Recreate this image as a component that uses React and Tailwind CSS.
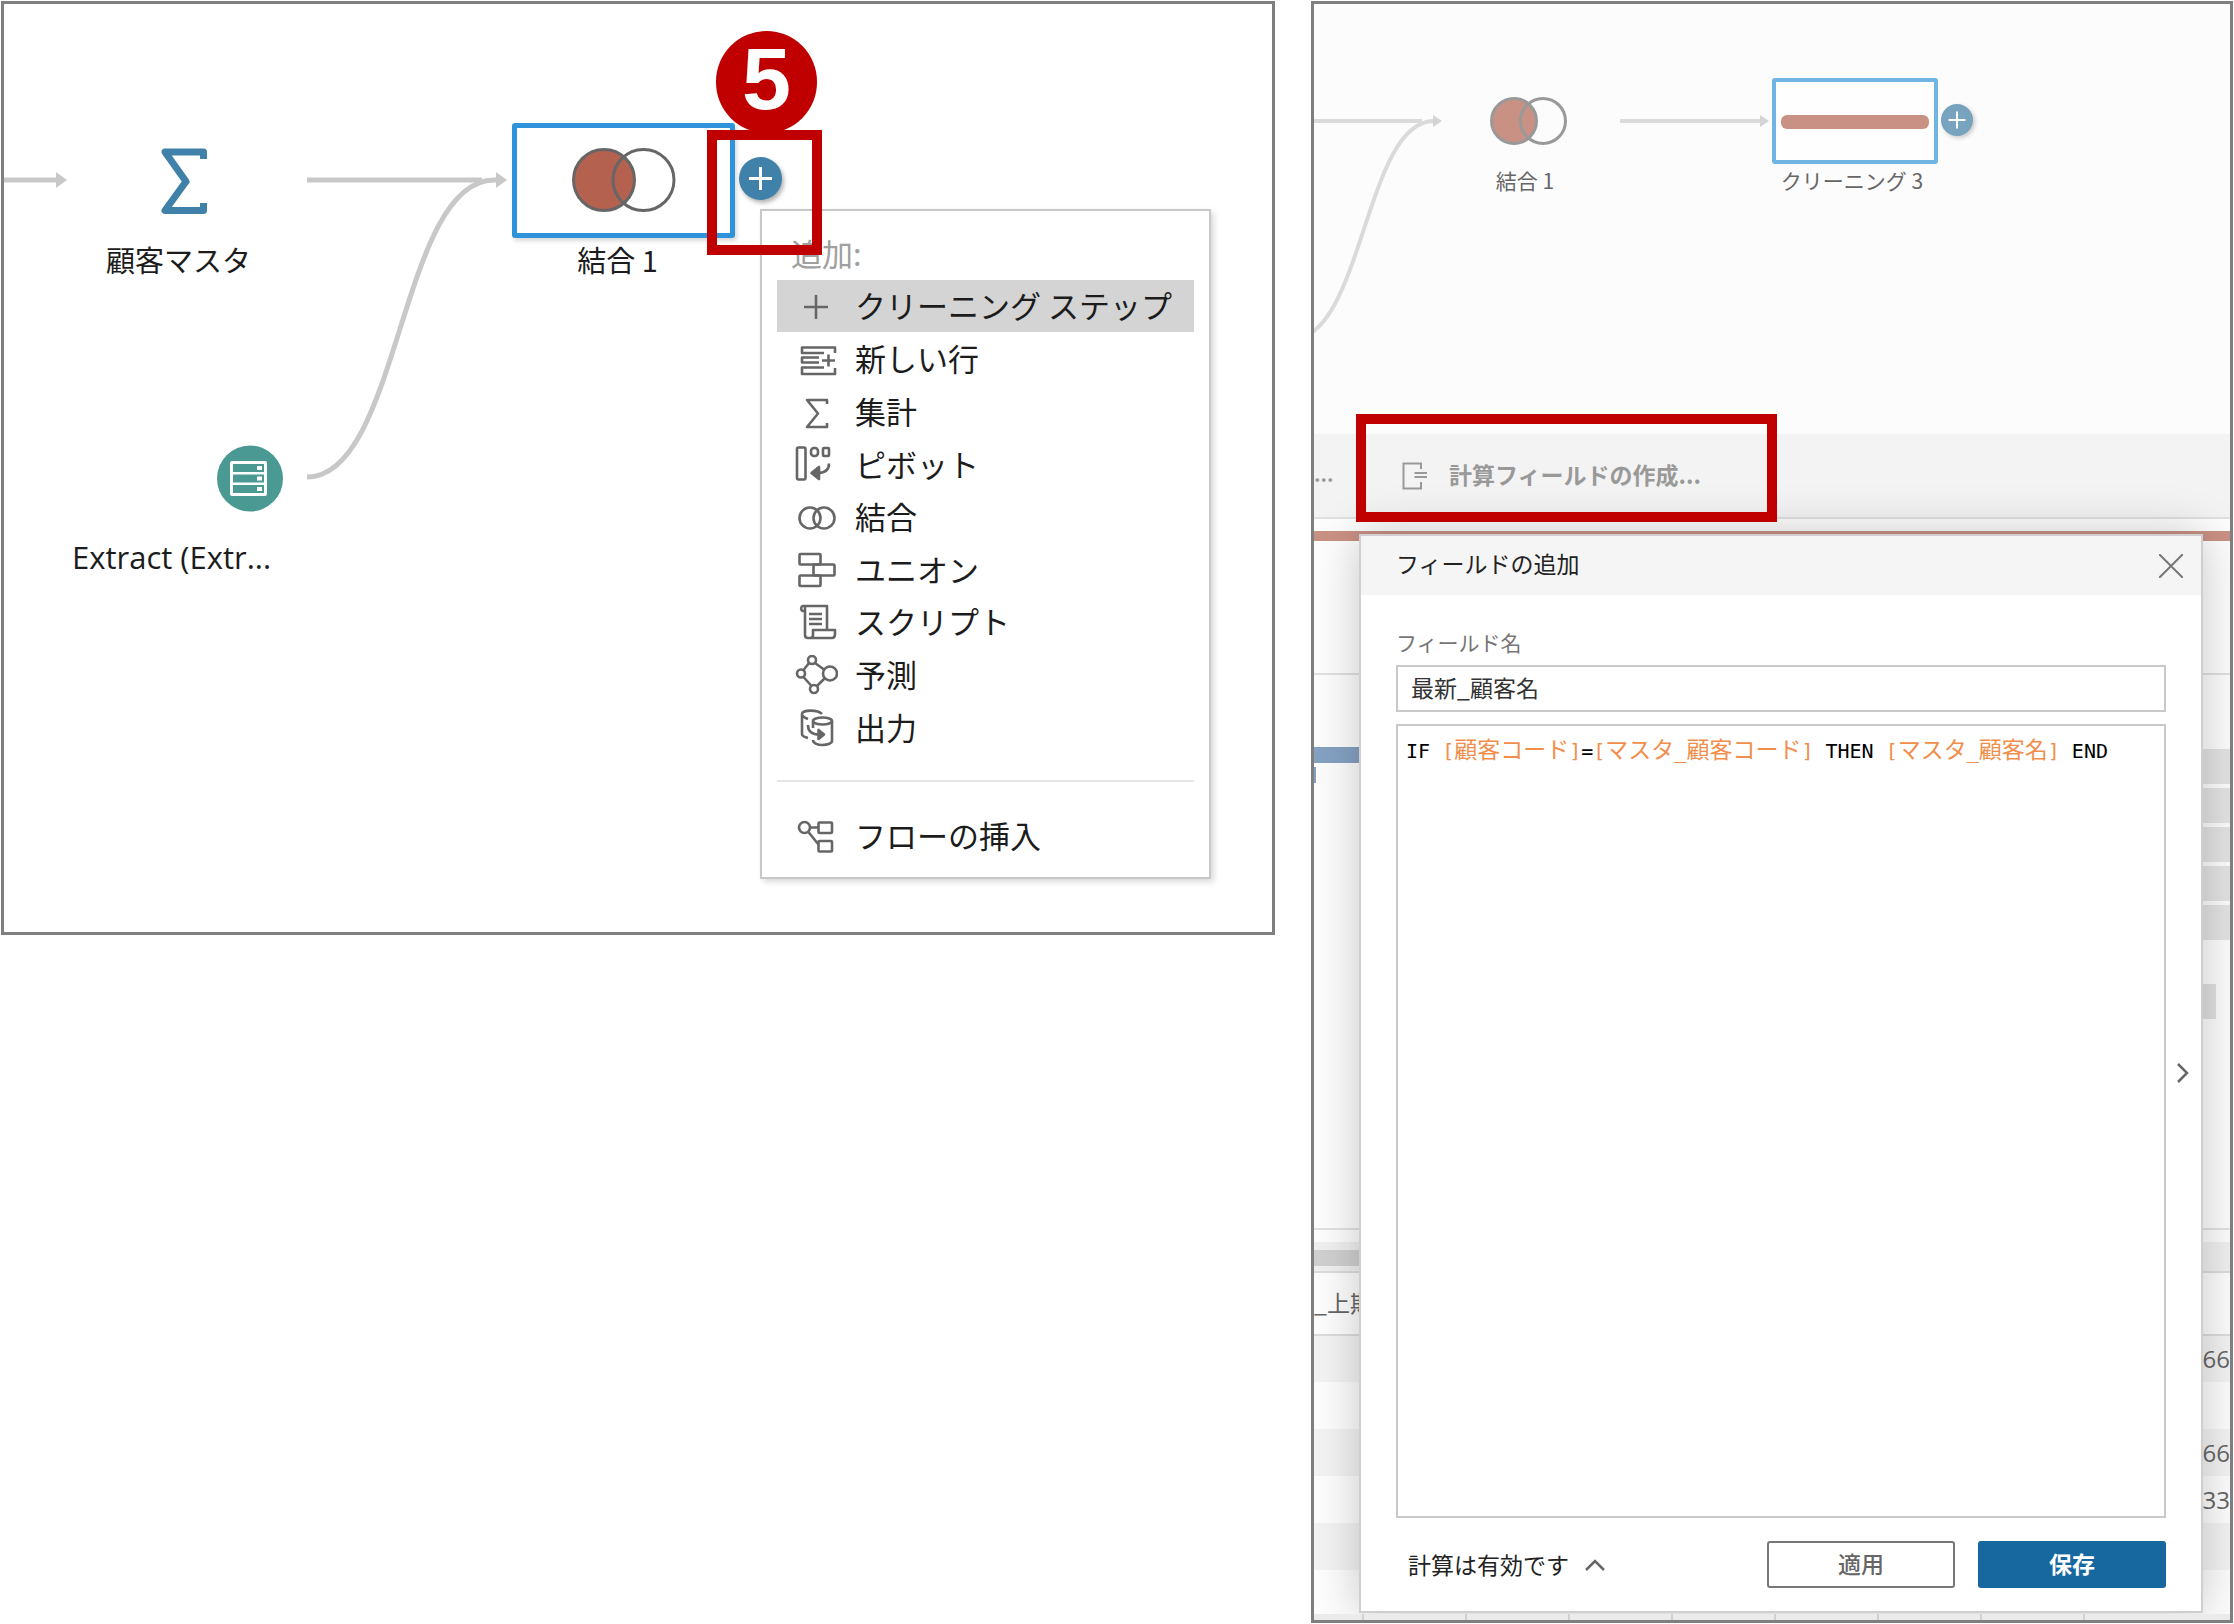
import React, { useState } from 'react';

const stroke = { fill: 'none', stroke: '#666', strokeWidth: 2.6, strokeLinejoin: 'round' };

const icons = {
  clean: <path d="M10 21h24M22 9v24" />,
  row: <path d="M41 14V8.500H8V14h22M25 18.500H8v5h17M30 28.500H8V35h33v-6M34.500 15.500v12M28 21.500h13" />,
  sum: <path d="M33 12V8H13l11 13.500L13 35h20v-4" />,
  pivot: (
    <>
      <rect x="3" y="2.500" width="8.500" height="32" rx="1.500" />
      <rect x="17" y="3" width="7" height="8" rx="3" />
      <rect x="29" y="3" width="6" height="8" rx="1" />
      <path d="M35 18.500c0 6-3 9-10 9.500" />
      <path d="M17.500 28l7.500-6v12z" fill="#666" />
    </>
  ),
  join: (
    <>
      <circle cx="16" cy="21" r="10.500" />
      <circle cx="30" cy="21" r="10.500" />
    </>
  ),
  union: (
    <>
      <rect x="5.500" y="4" width="21" height="10.500" rx="1" />
      <rect x="19.500" y="14.500" width="21" height="11" rx="1" />
      <rect x="5.500" y="25.500" width="21" height="10.500" rx="1" />
    </>
  ),
  script: (
    <>
      <path d="M11 9H8.500a3 3 0 0 1 0-5H33v23M11 4v29c0 2 1 3 3 3h24c2 0 3-1.500 3-4v-4H19v5c0 2-1 3-3 3" />
      <path d="M15 12h13M15 17h13M15 22h13" />
    </>
  ),
  predict: (
    <>
      <circle cx="18" cy="5" r="4" />
      <circle cx="36" cy="18.500" r="7" />
      <circle cx="7" cy="18.500" r="4" />
      <circle cx="20" cy="34" r="4" />
      <path d="M21 8l9 6.500M15 8l-5.500 7M9.500 22l8 9M23 31l8-8" />
    </>
  ),
  output: (
    <>
      <path d="M28 6C24 1.500 8 1.500 8 6v20c0 2 2 3 6 4M8 7c1 2 3 3 6 4" />
      <ellipse cx="28.500" cy="13" rx="9.500" ry="3.500" />
      <path d="M38 13v20c0 2-4 4-9.500 4S19 35 19 32M19 13v7" />
      <path d="M14 17c0 6 3 9.500 11 9.500" />
      <path d="M30 26.500l-5.500-4.500v9z" fill="#666" />
    </>
  ),
  flow: (
    <>
      <circle cx="10.500" cy="11.500" r="5.500" />
      <rect x="24.500" y="6.500" width="13.500" height="10.500" rx="1" />
      <rect x="24.500" y="25" width="13.500" height="10.500" rx="1" />
      <path d="M16 11.500h8.500M14 15.500l10.500 13" />
    </>
  ),
};

const menuItems = [
  ['row', '新しい行'],
  ['sum', '集計'],
  ['pivot', 'ピボット'],
  ['join', '結合'],
  ['union', 'ユニオン'],
  ['script', 'スクリプト'],
  ['predict', '予測'],
  ['output', '出力'],
];

const tableRows = ['66', '', '66', '33', '', ''];

const MenuIcon = ({ name }) => (
  <svg width="44" height="40" viewBox="0 0 44 40" {...stroke}>{icons[name]}</svg>
);

const MenuItem = ({ icon, label, active }) => (
  <button
    role="menuitem"
    className={`flex min-h-[52px] w-full items-center gap-[17px] pl-[17px] text-left ${active ? 'bg-[#d4d4d4]' : ''}`}
  >
    <MenuIcon name={icon} />
    <span className="pb-0.5">{label}</span>
  </button>
);

const AddMenu = () => (
  <div role="menu" className="absolute left-[756px] top-[205px] w-[451px] border-2 border-[#c8c8c8] bg-white px-[15px] pb-[15px] pt-[18px] text-[31px] leading-[48px] text-[#1c1c1c] shadow-[3px_3px_6px_rgba(0,0,0,0.15)]">
    <p className="h-[51px] pl-3.5 text-[#a0a0a0]">追加:</p>
    <MenuItem icon="clean" label="クリーニング ステップ" active />
    <div className="grid h-[422px] grid-rows-8 pt-px">
      {menuItems.map(([icon, label]) => <MenuItem key={icon} icon={icon} label={label} />)}
    </div>
    <hr className="mb-7 mt-[26px] border-t-2 border-[#e6e6e6]" />
    <MenuItem icon="flow" label="フローの挿入" />
  </div>
);

const FlowPanel = () => (
  <section className="relative h-[934px] min-w-0 flex-[1275] overflow-hidden border-[3px] border-[#7f7f7f] bg-white text-[29px] leading-9 text-[#1c1c1c]">
    {/* edges and node symbols */}
    <svg className="absolute left-0 top-0" width="760" height="540" viewBox="4 4 760 540" fill="none">
      <g stroke="#c8c8c8" strokeWidth="5">
        <path d="M0 180h58M307 180h175" />
        <path d="M307 477C400 477 400 180 494 180h4" />
      </g>
      <path d="M56 172l11 8-11 8zM496 172l11 8-11 8z" fill="#c8c8c8" />
      <path d="M203.500 159v-7H165l21 29.500-21 29H203.500V203" stroke="#3f81a9" strokeWidth="7" strokeLinejoin="round" />
      <circle cx="250" cy="478.500" r="33" fill="#4a9993" />
      <rect x="230" y="461" width="37" height="35" rx="2" fill="#fff" />
      <path d="M233 464h31v8h-31zM233 474.500h31v8h-31zM233 485h31v8h-31z" fill="#4a9993" />
      <path d="M257 466h5v4h-5zM257 476.500h5v4h-5zM257 487h5v4h-5z" fill="#fff" />
    </svg>
    <span className="absolute left-[102px] top-[237px]">顧客マスタ</span>
    <span className="absolute left-[68px] top-[535px] font-['Open_Sans',sans-serif] text-[31px]">Extract (Extr...</span>

    <div className="absolute left-[508px] top-[119px] flex h-[115px] w-[223px] items-center justify-center rounded-[3px] border-[5px] border-[#2f93dc] bg-white shadow-[2px_3px_4px_rgba(0,0,0,0.15)]">
      <svg width="106" height="66" viewBox="571 148 106 66" fill="none" stroke="#666" strokeWidth="3">
        <circle cx="604" cy="180" r="30.500" fill="#b46150" />
        <circle cx="643.500" cy="180" r="30.500" />
      </svg>
    </div>
    <span className="absolute left-[508px] top-[237px] w-[211px] text-center">結合 1</span>
    <button aria-label="追加" className="absolute left-[735px] top-[153px] h-[43px] w-[43px] rounded-full bg-[#3f81a9] shadow-[2px_3px_4px_rgba(0,0,0,0.3)]">
      <svg width="43" height="43" viewBox="0 0 43 43" stroke="#fff" strokeWidth="3"><path d="M10 21.500h23M21.500 10v23" /></svg>
    </button>
    <AddMenu />

    <div className="absolute left-[703px] top-[126px] h-[125px] w-[115px] border-[10px] border-[#c00000]" />
    <div className="absolute left-[712px] top-[27px] flex h-[102px] w-[101px] items-center justify-center rounded-full bg-[#c00000] pb-1.5 font-['Liberation_Sans',sans-serif] text-[88px] font-bold leading-none text-white">5</div>
  </section>
);

const StepCanvas = () => (
  <div className="relative h-[430px] bg-[#fcfcfc] text-[21px] leading-7 text-[#666]">
    <svg className="absolute left-0 top-0" width="480" height="430" viewBox="1314 4 480 430" fill="none">
      <g stroke="#dadada" strokeWidth="4">
        <path d="M1300 121h122M1620 121h143" />
        <path d="M1290 340C1364 340 1364 121 1434 121" />
      </g>
      <path d="M1433 115l9 6-9 6zM1760 115l9 6-9 6z" fill="#d4d4d4" />
      <g stroke="#999" strokeWidth="3">
        <circle cx="1514" cy="121" r="22.500" fill="#c99184" />
        <circle cx="1543" cy="121" r="22.500" />
      </g>
    </svg>
    <span className="absolute left-[150px] top-[162px] w-[122px] text-center">結合 1</span>
    <div className="absolute left-[458px] top-[74px] flex h-[86px] w-[166px] items-center justify-center rounded-[3px] border-4 border-[#70b4e4] bg-[#fefefe] pt-0.5">
      <div className="h-3.5 w-[148px] rounded-md bg-[#c99184]" />
    </div>
    <span className="absolute left-[438px] top-[162px] w-[200px] text-center">クリーニング 3</span>
    <button aria-label="追加" className="absolute left-[627px] top-[100px] h-8 w-8 rounded-full bg-[#78a3be] shadow-[2px_2px_4px_rgba(0,0,0,0.2)]">
      <svg width="32" height="32" viewBox="0 0 32 32" stroke="#fff" strokeWidth="2"><path d="M7.500 16h17M16 7.500v17" /></svg>
    </button>
  </div>
);

const Backdrop = () => (
  <>
    <div className="flex h-[85px] items-center border-b-2 border-[#e0e0e0] bg-[#f3f3f3] pb-1 text-[23px] font-bold leading-8 text-[#999]">
      <span className="w-[88px] text-[20px]">...</span>
      <button className="flex items-center gap-[22px]">
        <svg className="mt-1" width="25" height="28" viewBox="0 0 25 28" fill="none" stroke="#999" strokeWidth="2">
          <path d="M19 7V1.500H1.500v25H19V20M12.500 11H25M12.500 15H25" />
        </svg>
        <span>計算フィールドの作成...</span>
      </button>
    </div>
    <div className="mt-3 h-2.5 bg-[#c99184]" />
    <div className="h-[134px] border-b-2 border-[#e0e0e0]" />
    <div className="flex h-[555px] items-start justify-between border-b-2 border-[#e2e2e2] pt-[72px]">
      <div className="w-[60px]">
        <div className="h-4 bg-[#85a2c3]" />
        <div className="mt-1 h-4 w-0.5 bg-[#85a2c3]" />
      </div>
      <div className="flex w-16 flex-col gap-1 pt-0.5">
        <div className="h-[35px] bg-[#e3e3e3]" />
        <div className="h-[35px] bg-[#e3e3e3]" />
        <div className="h-[35px] bg-[#e3e3e3]" />
        <div className="h-[35px] bg-[#e3e3e3]" />
        <div className="h-[35px] bg-[#e3e3e3]" />
        <div className="mt-10 h-[35px] w-[50px] bg-[#e0e0e0]" />
      </div>
    </div>
    <div className="mt-3 h-[31px] border-b-2 border-[#dcdcdc] bg-[#f0f0f0] pt-2">
      <div className="h-4 w-3/4 bg-[#d0d0d0]" />
    </div>
    <table className="w-full table-fixed text-[23px] leading-8 text-[#666]">
      <thead>
        <tr className="h-[62px] border-b-2 border-[#dcdcdc]">
          <th className="p-0 pb-1 text-left font-normal">_上期</th>
          <th aria-label="値" />
        </tr>
      </thead>
      <tbody>
        {tableRows.map((value, i) => (
          <tr key={i} className="h-[47px] odd:bg-[#f3f3f3]">
            <td />
            <td className="p-0 text-right font-['Open_Sans',sans-serif] text-[24px]">{value}</td>
          </tr>
        ))}
      </tbody>
    </table>
  </>
);

const Name = ({ children }) => <span className="text-[23px] text-[#f28e4b]">{children}</span>;
const Bracket = ({ children }) => <span className="text-[#f28e4b]">{children}</span>;

const FieldDialog = () => {
  const [fieldName, setFieldName] = useState('最新_顧客名');

  return (
    <div role="dialog" aria-label="フィールドの追加" className="absolute bottom-[7px] left-[45px] right-[27px] top-[530px] flex flex-col border-2 border-[#cfcfcf] bg-white text-[23px] text-[#222] shadow-[0_0_44px_rgba(0,0,0,0.22)]">
      <div className="flex h-[59px] shrink-0 items-center justify-between bg-[#f5f5f5] pl-[35px] pr-[18px]">
        <h2 className="pb-1">フィールドの追加</h2>
        <button aria-label="閉じる">
          <svg width="24" height="24" viewBox="0 0 24 24" stroke="#777" strokeWidth="2"><path d="M0 0l24 24M24 0L0 24" /></svg>
        </button>
      </div>
      <div className="flex min-h-0 flex-1 flex-col px-[35px] pt-8">
        <label htmlFor="field-name" className="block h-[38px] text-[21px] leading-[30px] text-[#777]">フィールド名</label>
        <input
          id="field-name"
          className="h-[47px] shrink-0 border-2 border-[#c9c9c9] px-[13px] pb-1 leading-8 text-[#333] outline-none"
          value={fieldName}
          onChange={(e) => setFieldName(e.target.value)}
        />
        <div
          role="textbox"
          aria-multiline="true"
          aria-label="計算式"
          contentEditable
          suppressContentEditableWarning
          spellCheck={false}
          className="mt-3 flex-1 whitespace-pre border-2 border-[#c9c9c9] px-2 pt-2 font-['DejaVu_Sans_Mono','Noto_Sans_CJK_JP',monospace] text-[20px] leading-8 text-black outline-none"
        >
          IF <Bracket>[</Bracket><Name>顧客コード</Name><Bracket>]</Bracket>=<Bracket>[</Bracket><Name>マスタ</Name><Bracket>_</Bracket><Name>顧客コード</Name><Bracket>]</Bracket> THEN <Bracket>[</Bracket><Name>マスタ</Name><Bracket>_</Bracket><Name>顧客名</Name><Bracket>]</Bracket> END
        </div>
      </div>
      <div className="flex h-[93px] shrink-0 items-center pl-[47px] pr-[35px]">
        <button className="mr-auto flex items-center gap-4">
          計算は有効です
          <svg width="20" height="12" viewBox="0 0 20 12" fill="none" stroke="#666" strokeWidth="2.500"><path d="M1 11l9-9 9 9" /></svg>
        </button>
        <button className="h-[47px] w-[188px] rounded-[3px] border-2 border-[#777] pb-0.5 font-medium text-[#666]">適用</button>
        <button className="ml-[23px] h-[47px] w-[188px] rounded-[3px] bg-[#1868a0] pb-0.5 font-bold text-white">保存</button>
      </div>
      <button aria-label="展開" className="absolute right-3 top-[527px]">
        <svg width="12" height="20" viewBox="0 0 12 20" fill="none" stroke="#666" strokeWidth="2.500"><path d="M1 1l9 9-9 9" /></svg>
      </button>
    </div>
  );
};

const StepPanel = () => (
  <section className="relative h-[1622px] min-w-0 flex-[921] overflow-hidden border-[3px] border-[#7f7f7f] bg-[#fdfdfd]">
    <StepCanvas />
    <Backdrop />
    <FieldDialog />
    <div className="absolute inset-x-0 bottom-0 flex h-1.5 gap-[101px] bg-[#ebebeb] pl-12">
      {[1, 2, 3, 4, 5, 6, 7, 8].map((n) => <i key={n} className="w-0.5 bg-[#d0d0d0]" />)}
    </div>
    <div className="absolute left-[42px] top-[410px] h-[108px] w-[421px] border-[10px] border-[#c00000]" />
  </section>
);

const App = () => (
  <main className="flex items-start gap-9 bg-white p-px font-['Noto_Sans_CJK_JP',sans-serif]">
    <FlowPanel />
    <StepPanel />
  </main>
);

export default App;
